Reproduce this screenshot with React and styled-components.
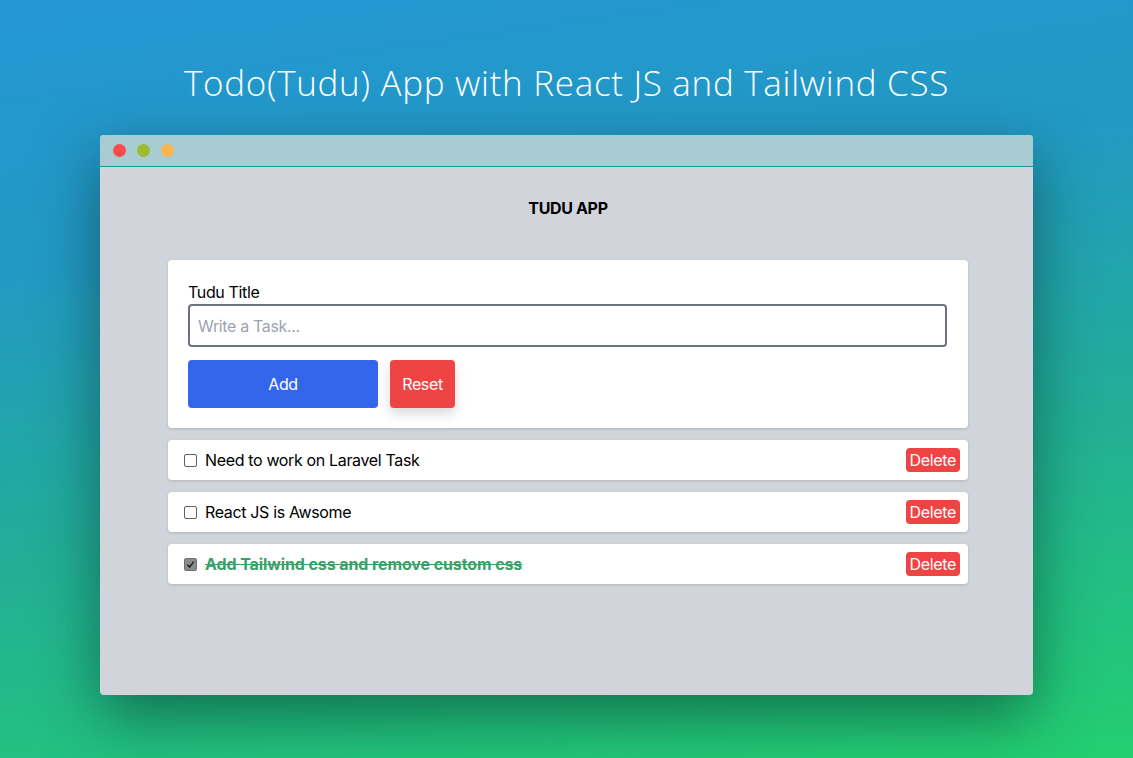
import React, { useState } from "react";
import styled, { createGlobalStyle } from "styled-components";

const GlobalStyle = createGlobalStyle`
  html, body {
    margin: 0;
    padding: 0;
  }
  body {
    font-family: Inter, "Liberation Sans", sans-serif;
    letter-spacing: -0.35px;
  }
`;

const initialTodos = [
  { id: 1, title: "Need to work on Laravel Task", done: false },
  { id: 2, title: "React JS is Awsome", done: false },
  { id: 3, title: "Add Tailwind css and remove custom css", done: true },
];

const App = () => {
  const [todos] = useState(initialTodos);

  return (
    <Page>
      <GlobalStyle />
      <Headline>Todo(Tudu) App with React JS and Tailwind CSS</Headline>
      <Window>
        <TitleBar>
          <Dot color="#fc4a4a" />
          <Dot color="#9bbb30" />
          <Dot color="#fdb54e" />
        </TitleBar>
        <Body>
          <AppTitle>TUDU APP</AppTitle>
          <FormCard>
            <Label>Tudu Title</Label>
            <TaskInput placeholder="Write a Task..." />
            <Actions>
              <AddButton>Add</AddButton>
              <ResetButton>Reset</ResetButton>
            </Actions>
          </FormCard>
          <List>
            {todos.map((todo) => (
              <Item key={todo.id}>
                <Check checked={todo.done}>
                  {todo.done && (
                    <svg width="9" height="9" viewBox="0 0 10 10">
                      <path
                        d="M1.5 5.2 L4 7.8 L8.6 1.8"
                        fill="none"
                        stroke="#222"
                        strokeWidth="1.7"
                      />
                    </svg>
                  )}
                </Check>
                <ItemText $done={todo.done}>{todo.title}</ItemText>
                <DeleteButton>Delete</DeleteButton>
              </Item>
            ))}
          </List>
        </Body>
      </Window>
    </Page>
  );
};

// styled components
const Page = styled.div`
  width: 100%;
  min-height: 758px;
  display: flex;
  flex-direction: column;
  align-items: center;
  background: linear-gradient(172deg, #2497d3 0%, #2299c4 30%, #22ad98 60%, #23cf70 100%);
  overflow: hidden;
`;

const Headline = styled.h1`
  margin: 63px 0 32px;
  font-family: "Open Sans", sans-serif;
  font-weight: 300;
  font-size: 35px;
  line-height: 40px;
  color: #ffffff;
  letter-spacing: 0.7px;
`;

const Window = styled.div`
  width: 933px;
  height: 560px;
  display: flex;
  flex-direction: column;
  background: #d1d5db;
  border-radius: 4px;
  box-shadow: 0 22px 60px rgba(0, 40, 30, 0.5);
  overflow: hidden;
`;

const TitleBar = styled.div`
  height: 31px;
  display: flex;
  align-items: center;
  gap: 11px;
  padding: 0 13px;
  background: #a9cbd2;
  border-bottom: 1px solid #1a93a8;
`;

const Dot = styled.span`
  width: 13px;
  height: 13px;
  border-radius: 50%;
  background: ${(p) => p.color};
`;

const Body = styled.div`
  flex: 1;
  display: flex;
  flex-direction: column;
  align-items: center;
  padding: 29px 65px 0 68px;
`;

const AppTitle = styled.h2`
  margin: 0 0 40px;
  font-size: 16px;
  line-height: 24px;
  font-weight: 700;
  color: #000;
`;

const FormCard = styled.div`
  width: 800px;
  box-sizing: border-box;
  padding: 20px;
  background: #fff;
  border-radius: 4px;
  box-shadow: 0 1px 3px rgba(0, 0, 0, 0.15);
  display: flex;
  flex-direction: column;
`;

const Label = styled.label`
  font-size: 16px;
  line-height: 24px;
  color: #000;
`;

const TaskInput = styled.input`
  width: 759px;
  height: 43px;
  box-sizing: border-box;
  border: 2px solid #6b7280;
  border-radius: 4px;
  padding: 0 8px;
  font-family: Inter, sans-serif;
  font-size: 16px;
  letter-spacing: -0.35px;
  outline: none;
  &::placeholder {
    color: #9ca3af;
  }
`;

const Actions = styled.div`
  display: flex;
  gap: 12px;
  margin-top: 13px;
`;

const AddButton = styled.button`
  width: 190px;
  height: 48px;
  border: none;
  border-radius: 4px;
  background: #3366ea;
  color: #fff;
  font-family: Inter, sans-serif;
  font-size: 16px;
  letter-spacing: -0.35px;
`;

const ResetButton = styled.button`
  width: 65px;
  height: 48px;
  border: none;
  border-radius: 4px;
  background: #ef4444;
  color: #fff;
  font-family: Inter, sans-serif;
  font-size: 16px;
  letter-spacing: -0.35px;
  box-shadow: 0 6px 12px rgba(0, 0, 0, 0.15);
`;

const List = styled.div`
  display: flex;
  flex-direction: column;
  gap: 12px;
  margin-top: 12px;
`;

const Item = styled.div`
  width: 800px;
  height: 40px;
  box-sizing: border-box;
  display: flex;
  align-items: center;
  padding: 0 8px 0 16px;
  background: #fff;
  border-radius: 4px;
  box-shadow: 0 1px 3px rgba(0, 0, 0, 0.15);
`;

const Check = styled.span`
  width: 13px;
  height: 13px;
  box-sizing: border-box;
  display: flex;
  align-items: center;
  justify-content: center;
  border: 1px solid ${(p) => (p.checked ? "#707070" : "#5f5f5f")};
  border-radius: 2px;
  background: ${(p) => (p.checked ? "#8b8b8b" : "#fff")};
  margin-right: 8px;
`;

const ItemText = styled.span`
  flex: 1;
  font-size: 16px;
  color: ${(p) => (p.$done ? "#38a169" : "#000")};
  font-weight: ${(p) => (p.$done ? 700 : 400)};
  letter-spacing: ${(p) => (p.$done ? "-0.1px" : "-0.35px")};
  text-decoration: ${(p) => (p.$done ? "line-through" : "none")};
`;

const DeleteButton = styled.button`
  height: 24px;
  padding: 0 4px;
  border: none;
  border-radius: 4px;
  background: #ef4444;
  color: #fff;
  font-family: Inter, sans-serif;
  font-size: 16px;
  letter-spacing: -0.35px;
  line-height: 24px;
`;

export default App;
